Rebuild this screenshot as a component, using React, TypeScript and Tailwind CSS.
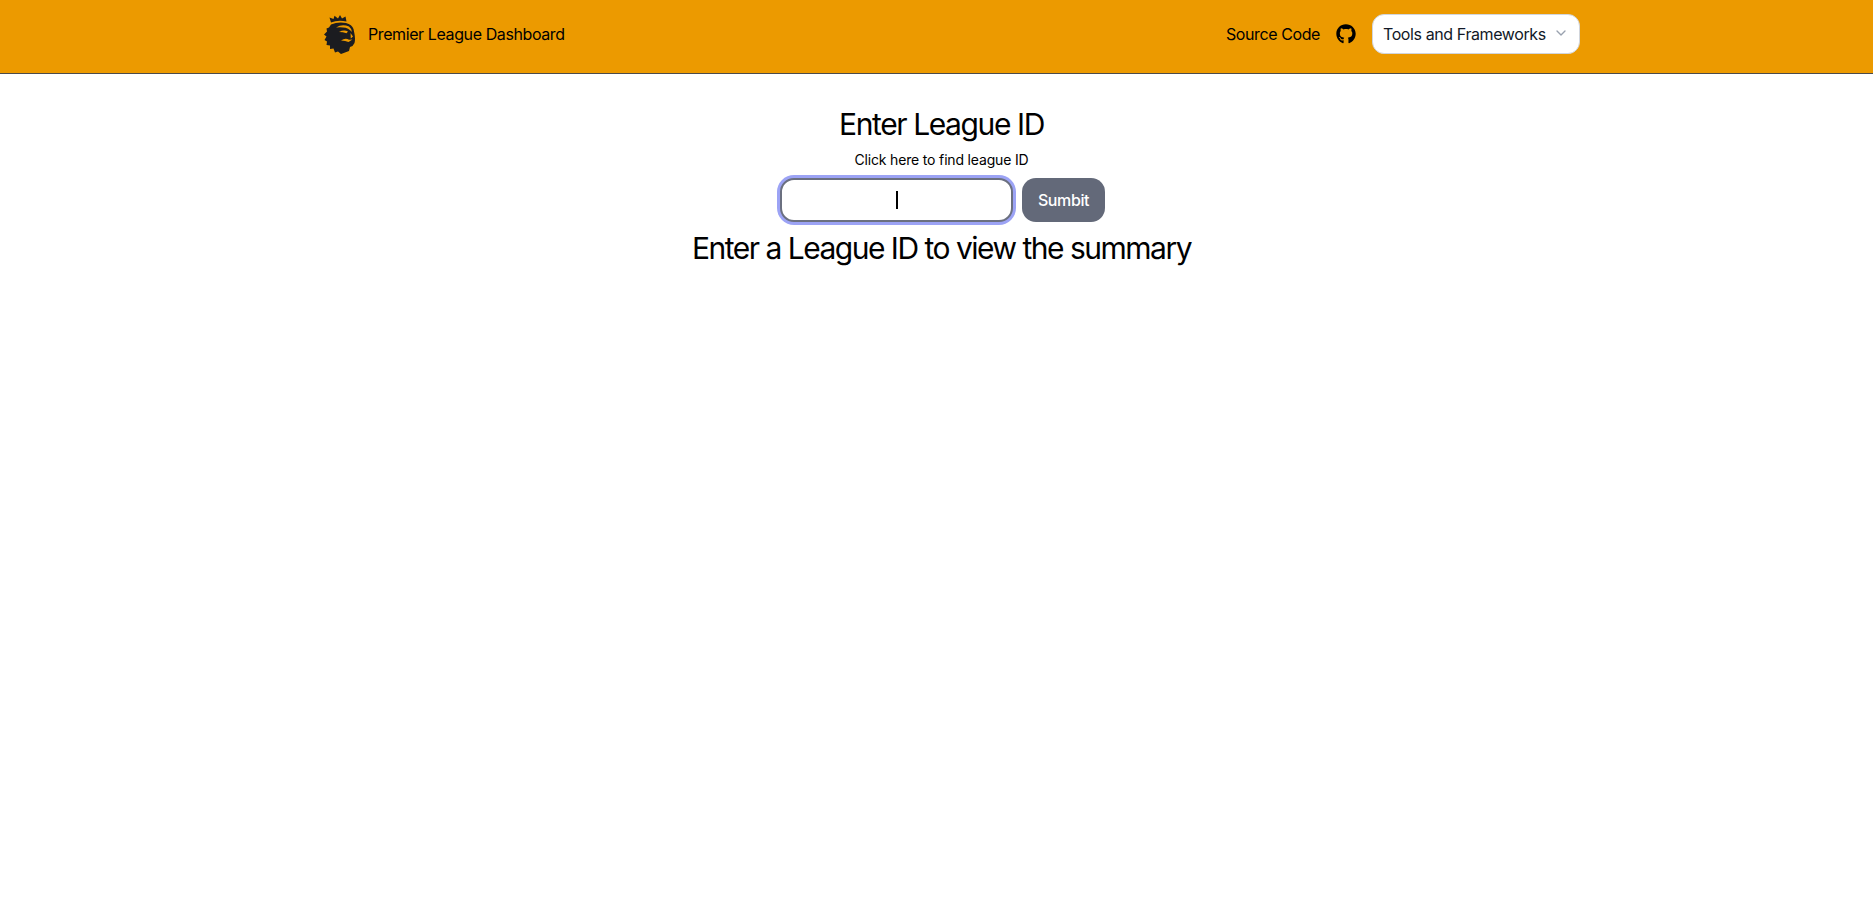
import React from 'react';
import { ChevronDown } from 'lucide-react';
import { FaGithub } from 'react-icons/fa';

const LionLogo = () => (
  <svg viewBox="0 0 31 39" className="w-[31px] h-[39px]">
    {/* crown */}
    <path d="M7 7.5 L5.5 2.5 L9.5 4 L10.5 .8 L14 3.5 L16 0 L18 3.5 L21.5 1.5 L22.5 6.5 Q14 4.5 7 7.5 Z" fill="#1b1c20" />
    {/* mane and face */}
    <path
      d="M7 9.5 Q14 6.5 22 8 Q28 9.5 29.5 14 L30.5 19 Q31.5 24 30.5 28 L28.5 31 L26 32 L25 36 L17 39 L14 36.5 L11 37.5 L9.5 33.5 L6 34 L6 30.5 L2.5 30 L3 26.5 L0.5 25 L2.5 21.5 L0 19.5 L3 16.5 L2.5 13.5 L5 12.5 Z"
      fill="#1b1c20"
    />
    {/* orange face lines */}
    <path d="M12 12.5 Q18 8.8 25 11.5 Q27.5 13.5 28 17 Q24.5 12.5 19 12.4 Q15 12.2 12 12.5 Z" fill="#ec9a00" />
    <path d="M15 17 Q20 14.5 24 16.5 L22.5 18.2 Q19 17 15 17 Z" fill="#ec9a00" />
    <path d="M26.5 18 L29 21.5 L26.8 23.5 Z" fill="#ec9a00" />
    <path d="M17 25.5 Q21.5 22.5 25 24.8 L28.5 24.4 L24.5 27 Q21.5 25.6 17 25.5 Z" fill="#ec9a00" />
  </svg>
);

export default function App() {
  return (
    <div className="min-h-screen bg-white text-black font-['Inter',sans-serif]">
      <nav className="h-[74px] bg-[#ec9a00] border-b border-[#4b4b4b] flex items-center pb-[5px]">
        <div className="w-full flex items-center justify-between pl-[324px] pr-[293px]">
          <div className="flex items-center gap-[13px]">
            <LionLogo />
            <span className="text-base tracking-[-0.4px]">Premier League Dashboard</span>
          </div>
          <div className="flex items-center">
            <span className="text-base tracking-[-0.4px]">Source Code</span>
            <FaGithub className="ml-4 w-5 h-5 text-black" />
            <div className="ml-4 w-[208px] h-10 bg-white rounded-xl border border-gray-300 flex items-center justify-between pl-[10px] pr-[10px] text-[#111827]">
              <span className="text-base tracking-[-0.4px] whitespace-nowrap">Tools and Frameworks</span>
              <ChevronDown className="w-4 h-4 text-gray-400 -mt-0.5" />
            </div>
          </div>
        </div>
      </nav>
      <main className="flex flex-col items-center pl-[10px] pt-8">
        <h1 className="text-3xl leading-9 tracking-[-1.4px]">Enter League ID</h1>
        <a className="text-sm mt-2 leading-5 tracking-[-0.17px]">Click here to find league ID</a>
        <form className="flex items-center gap-[9px] mt-2 ml-[2px]">
          <div className="w-[233px] h-11 bg-white rounded-[14px] border-2 border-[#6b7080] ring-[3px] ring-[#9ca3f5] flex items-center justify-center">
            <span className="w-0.5 h-[18px] bg-black ml-px" />
          </div>
          <button type="button" className="w-[83px] h-11 rounded-[14px] bg-[#636979] text-white text-base font-medium tracking-[-0.4px]">Sumbit</button>
        </form>
        <h2 className="text-3xl leading-9 mt-2 tracking-[-1.5px]">Enter a League ID to view the summary</h2>
      </main>
    </div>
  );
}
